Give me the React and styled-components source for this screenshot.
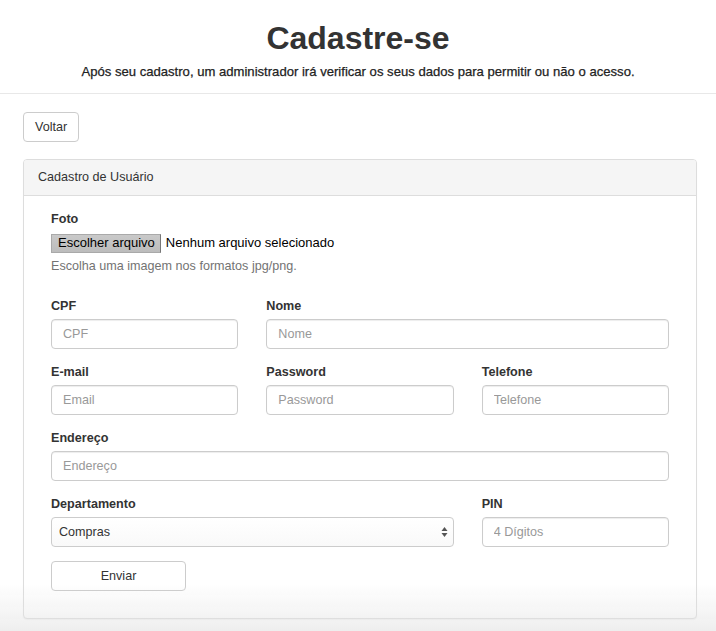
import React from "react";
import styled, { createGlobalStyle } from "styled-components";

const Global = createGlobalStyle`
  * { box-sizing: border-box; }
  html, body { margin: 0; padding: 0; background: #fff; }
  body {
    font-family: "Liberation Sans", Arial, "Helvetica Neue", sans-serif;
    font-size: 12.6px;
    line-height: 1.42857;
    color: #333;
  }
`;

const Header = styled.header`
  border-bottom: 1px solid #e8e8e8;
  padding: 21px 0 13px;
  text-align: center;
`;

const Title = styled.h1`
  margin: 0;
  font-size: 32px;
  font-weight: bold;
  line-height: 35px;
  color: #333;
`;

const Subtitle = styled.h5`
  margin: 7px 0 0;
  font-size: 13.1px;
  font-weight: normal;
  line-height: 17px;
  color: #222;
  -webkit-text-stroke: 0.25px #222;
`;

const Container = styled.main`
  padding: 18px 19px 12px 23px;
`;

const Button = styled.button`
  display: inline-flex;
  align-items: center;
  justify-content: center;
  height: 30px;
  padding: 0 11px;
  width: ${(p) => (p.$width ? `${p.$width}px` : "auto")};
  font-family: inherit;
  font-size: 12.6px;
  color: #333;
  background: #fff;
  border: 1px solid #ccc;
  border-radius: 4px;
  cursor: pointer;
`;

const Panel = styled.section`
  margin-top: 17px;
  border: 1px solid #ddd;
  border-radius: 4px;
  background: #fff;
  box-shadow: 0 1px 1px rgba(0, 0, 0, 0.05);
`;

const PanelHeading = styled.div`
  height: 36px;
  display: flex;
  align-items: center;
  padding: 0 14px;
  background: #f5f5f5;
  border-bottom: 1px solid #ddd;
  border-radius: 3px 3px 0 0;
  color: #333;
`;

const PanelBody = styled.div`
  padding: 15px 27px 27px;
`;

const Grid = styled.div`
  display: grid;
  grid-template-columns: repeat(3, 1fr);
  column-gap: 28px;
`;

const Group = styled.div`
  grid-column: span ${(p) => p.$span || 1};
  margin-bottom: ${(p) => (p.$mb != null ? p.$mb : 15)}px;
`;

const Label = styled.label`
  display: block;
  font-weight: bold;
  line-height: 17px;
  margin-bottom: ${(p) => (p.$mb != null ? p.$mb : 4)}px;
  color: #333;
`;

const FileRow = styled.div`
  display: flex;
  align-items: center;
  height: 21px;
  font-size: 13px;
  color: #000;
`;

const FileButton = styled.span`
  display: inline-flex;
  align-items: center;
  height: 19px;
  padding: 0 5px 0 6px;
  background: linear-gradient(#c9c9c9, #bcbcbc);
  border: 1px solid #a9a9a9;
  border-right-color: #777;
  margin-right: 5px;
  color: #000;
`;

const Help = styled.p`
  margin: 4px 0 0;
  line-height: 17px;
  color: #737373;
`;

const Input = styled.input`
  display: block;
  width: 100%;
  height: 30px;
  padding: 0 11px;
  font-family: inherit;
  font-size: 12.6px;
  color: #555;
  background: #fff;
  border: 1px solid #ccc;
  border-radius: 4px;
  box-shadow: inset 0 1px 1px rgba(0, 0, 0, 0.075);
  outline: none;
  &::placeholder { color: #999; }
`;

const SelectWrap = styled.div`
  position: relative;
`;

const Select = styled.select`
  display: block;
  width: 100%;
  height: 30px;
  padding: 0 20px 0 7px;
  font-family: inherit;
  font-size: 12.6px;
  color: #333;
  background: linear-gradient(#fff, #f9f9f9);
  border: 1px solid #ccc;
  border-radius: 4px;
  appearance: none;
  -webkit-appearance: none;
  outline: none;
`;

const Arrows = styled.svg`
  position: absolute;
  right: 6px;
  top: 50%;
  transform: translateY(-50%);
  pointer-events: none;
`;

const SubmitRow = styled.div`
  display: flex;
`;

const BottomFade = styled.div`
  position: fixed;
  left: 0;
  right: 0;
  bottom: 0;
  height: 48px;
  pointer-events: none;
  background: linear-gradient(rgba(225, 225, 225, 0), rgba(225, 225, 225, 0.55));
`;

export default function App() {
  return (
    <>
      <Global />
      <Header>
        <Title>Cadastre-se</Title>
        <Subtitle>
          Após seu cadastro, um administrador irá verificar os seus dados para permitir ou não o acesso.
        </Subtitle>
      </Header>
      <Container>
        <Button>Voltar</Button>
        <Panel>
          <PanelHeading>Cadastro de Usuário</PanelHeading>
          <PanelBody>
            <Group $mb={23}>
              <Label $mb={5}>Foto</Label>
              <FileRow>
                <FileButton>Escolher arquivo</FileButton>
                Nenhum arquivo selecionado
              </FileRow>
              <Help>Escolha uma imagem nos formatos jpg/png.</Help>
            </Group>
            <Grid>
              <Group>
                <Label>CPF</Label>
                <Input placeholder="CPF" />
              </Group>
              <Group $span={2}>
                <Label>Nome</Label>
                <Input placeholder="Nome" />
              </Group>
              <Group>
                <Label>E-mail</Label>
                <Input placeholder="Email" />
              </Group>
              <Group>
                <Label>Password</Label>
                <Input placeholder="Password" type="password" />
              </Group>
              <Group>
                <Label>Telefone</Label>
                <Input placeholder="Telefone" />
              </Group>
              <Group $span={3}>
                <Label>Endereço</Label>
                <Input placeholder="Endereço" />
              </Group>
              <Group $span={2} $mb={14}>
                <Label>Departamento</Label>
                <SelectWrap>
                  <Select defaultValue="Compras">
                    <option>Compras</option>
                    <option>Vendas</option>
                    <option>Financeiro</option>
                  </Select>
                  <Arrows width="7" height="12" viewBox="0 0 7 12">
                    <path d="M3.5 1 L6.5 5 L0.5 5 Z" fill="#555" />
                    <path d="M3.5 11 L6.5 7 L0.5 7 Z" fill="#555" />
                  </Arrows>
                </SelectWrap>
              </Group>
              <Group $mb={14}>
                <Label>PIN</Label>
                <Input placeholder="4 Dígitos" />
              </Group>
            </Grid>
            <SubmitRow>
              <Button $width={135}>Enviar</Button>
            </SubmitRow>
          </PanelBody>
        </Panel>
      </Container>
      <BottomFade />
    </>
  );
}
